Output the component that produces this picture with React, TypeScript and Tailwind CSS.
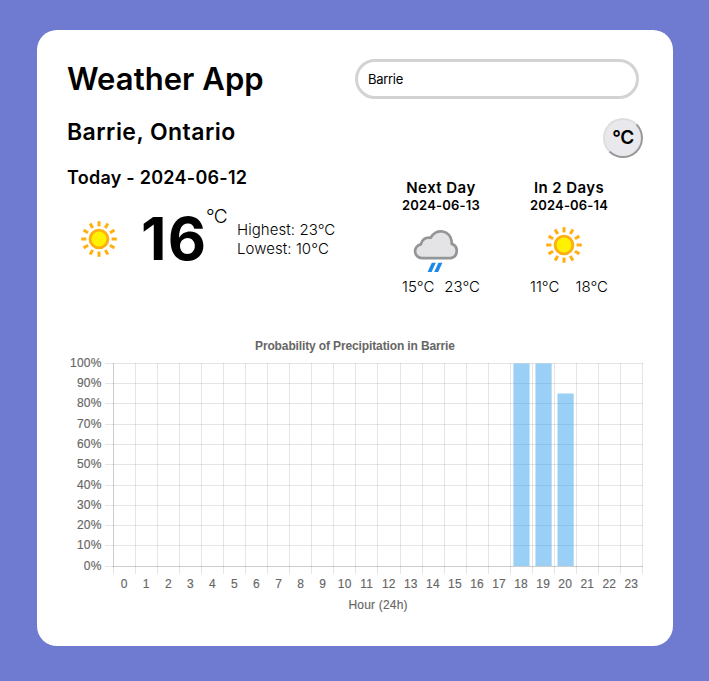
import React from "react";

const hours = Array.from({ length: 24 }, (_, i) => i);
const gridRows = [363, 383, 403, 424, 444, 464, 485, 505, 525, 545, 566];
const bars = [
  { hour: 18, top: 363.5 },
  { hour: 19, top: 363.5 },
  { hour: 20, top: 393.5 },
];
const step = 22.05;

function Sun({ className }: { className: string }) {
  return (
    <svg viewBox="0 0 36 36" className={className}>
      {Array.from({ length: 12 }, (_, i) => (
        <rect key={i} x="16.5" y="0.2" width="3" height="5.2" fill="#ffaf10" transform={`rotate(${i * 30} 18 18)`} />
      ))}
      <circle cx="18" cy="18" r="8.9" fill="#fff100" stroke="#ffaf10" strokeWidth="2.9" />
    </svg>
  );
}

function RainCloud({ className }: { className: string }) {
  return (
    <svg viewBox="0 0 48 44" className={className}>
      <path
        d="M9.4 30A6.9 6.9 0 0 1 8.3 16.3C9.2 11.4 13.4 8.6 18.2 9.7A11 11 0 0 1 39.2 13.4V15.8A7.4 7.4 0 0 1 38.6 30Z"
        transform="translate(0.5 -0.9)"
        fill="#e4e4e6"
        stroke="#939696"
        strokeWidth="2.7"
        strokeLinejoin="round"
      />
      <path d="M19.8 33.8h4l-4.2 9.2h-4zM26.4 33.8h4l-4.2 9.2h-4z" fill="#1e88e8" />
    </svg>
  );
}

function Chart() {
  return (
    <svg viewBox="67 330 576 288" className="block h-[288px] w-[576px] font-['Liberation_Sans',Arial,sans-serif] text-[12px]" fill="#666">
      <text x="355" y="350" textAnchor="middle" fontWeight="bold" textLength="200">Probability of Precipitation in Barrie</text>
      <g fill="#000" fillOpacity="0.1" shapeRendering="crispEdges">
        {gridRows.map((y) => (
          <rect key={y} x="105" y={y} width="538" height="1" />
        ))}
        {Array.from({ length: 25 }, (_, i) => (
          <rect key={i} x={Math.round(113 + 22.04 * i)} y="363" width="1" height="211" />
        ))}
        <rect x="113" y="363" width="1" height="204" />
        <rect x="113" y="566" width="530" height="1" />
      </g>
      {bars.map(({ hour, top }) => (
        <rect key={hour} x={113.4 + step * (hour + 0.5) - 7.93} y={top} width="16.2" height={566 - top} fill="#36a2eb" fillOpacity="0.5" />
      ))}
      <g letterSpacing="0.2" stroke="#666" strokeWidth="0.15">
        {gridRows.map((y, i) => (
          <text key={y} x="101.6" y={y + 4} textAnchor="end">{100 - i * 10}%</text>
        ))}
        {hours.map((h) => (
          <text key={h} x={113.2 + step * (h + 0.5)} y="588" textAnchor="middle">{h}</text>
        ))}
        <text x="378.1" y="609" textAnchor="middle">Hour (24h)</text>
      </g>
    </svg>
  );
}

export default function App() {
  return (
    <div className="h-[681px] w-[709px] bg-[#6e7bd0] pl-[37px] pt-[30px] font-['Inter',sans-serif] text-black">
      <main className="flex h-[616px] w-[636px] flex-col rounded-[20px] bg-white px-[30px] pt-[29px]">
        <header className="flex h-10 items-center">
          <h1 className="w-[288px] whitespace-nowrap text-[31px] font-semibold leading-10 tracking-[0.05px]">Weather App</h1>
          <input
            className="h-10 w-[284px] rounded-[20px] border-[3px] border-[#d3d3d3] bg-white px-2.5 text-[13px] tracking-[-0.3px] outline-none"
            defaultValue="Barrie"
          />
        </header>
        <div className="mt-[19px] flex h-10 justify-between">
          <h2 className="whitespace-nowrap text-[23px] font-semibold leading-7 tracking-[0.45px]">Barrie, Ontario</h2>
          <button className="h-10 w-10 rounded-full border-2 border-t-[#dedede] border-r-[#999] border-b-[#999] border-l-[#dedede] bg-[#e9e9ed] text-[19px] font-semibold tracking-[-0.5px]">
            °C
          </button>
        </div>
        <div className="flex h-[172px]">
          <section className="w-[313px] pt-2">
            <h3 className="whitespace-nowrap text-[18px] font-semibold leading-6 tracking-[0.25px]">Today - 2024-06-12</h3>
            <div className="flex">
              <Sun className="ml-[14px] mt-[29px] h-[40px] w-[36px]" />
              <span className="ml-[24px] mt-[17px] w-[65px] text-[59px] font-bold leading-[64px] tracking-[1.4px]">16</span>
              <span className="mt-[15px] w-[31px] text-[19px] font-light leading-6 tracking-[-0.6px]">°C</span>
              <div className="mt-[30px] whitespace-nowrap text-[15px] font-light leading-[19px] tracking-[0.06px]">
                <p>Highest: 23°C</p>
                <p>Lowest: 10°C</p>
              </div>
            </div>
          </section>
          <section className="flex gap-[48px] pl-[21px] pt-5">
            <article className="flex w-20 flex-col items-center">
              <h4 className="whitespace-nowrap text-[15px] font-semibold leading-5 tracking-[0.45px]">Next Day</h4>
              <h5 className="whitespace-nowrap text-[13px] font-semibold leading-[15px] tracking-[0.2px]">2024-06-13</h5>
              <RainCloud className="-ml-[10px] mt-[16px] h-[44px] w-[48px]" />
              <div className="mt-[4px] flex w-full justify-between pl-px pr-px text-[15px] font-light leading-5">
                <span>15°C</span>
                <span>23°C</span>
              </div>
            </article>
            <article className="flex w-20 flex-col items-center">
              <h4 className="whitespace-nowrap text-[15px] font-semibold leading-5 tracking-[0.4px]">In 2 Days</h4>
              <h5 className="whitespace-nowrap text-[13px] font-semibold leading-[15px] tracking-[0.15px]">2024-06-14</h5>
              <Sun className="-ml-[10px] mt-[14px] h-[36px] w-[36px]" />
              <div className="mt-[14px] flex w-full justify-between pl-px pr-px text-[15px] font-light leading-5">
                <span>11°C</span>
                <span>18°C</span>
              </div>
            </article>
          </section>
        </div>
        <Chart />
      </main>
    </div>
  );
}
